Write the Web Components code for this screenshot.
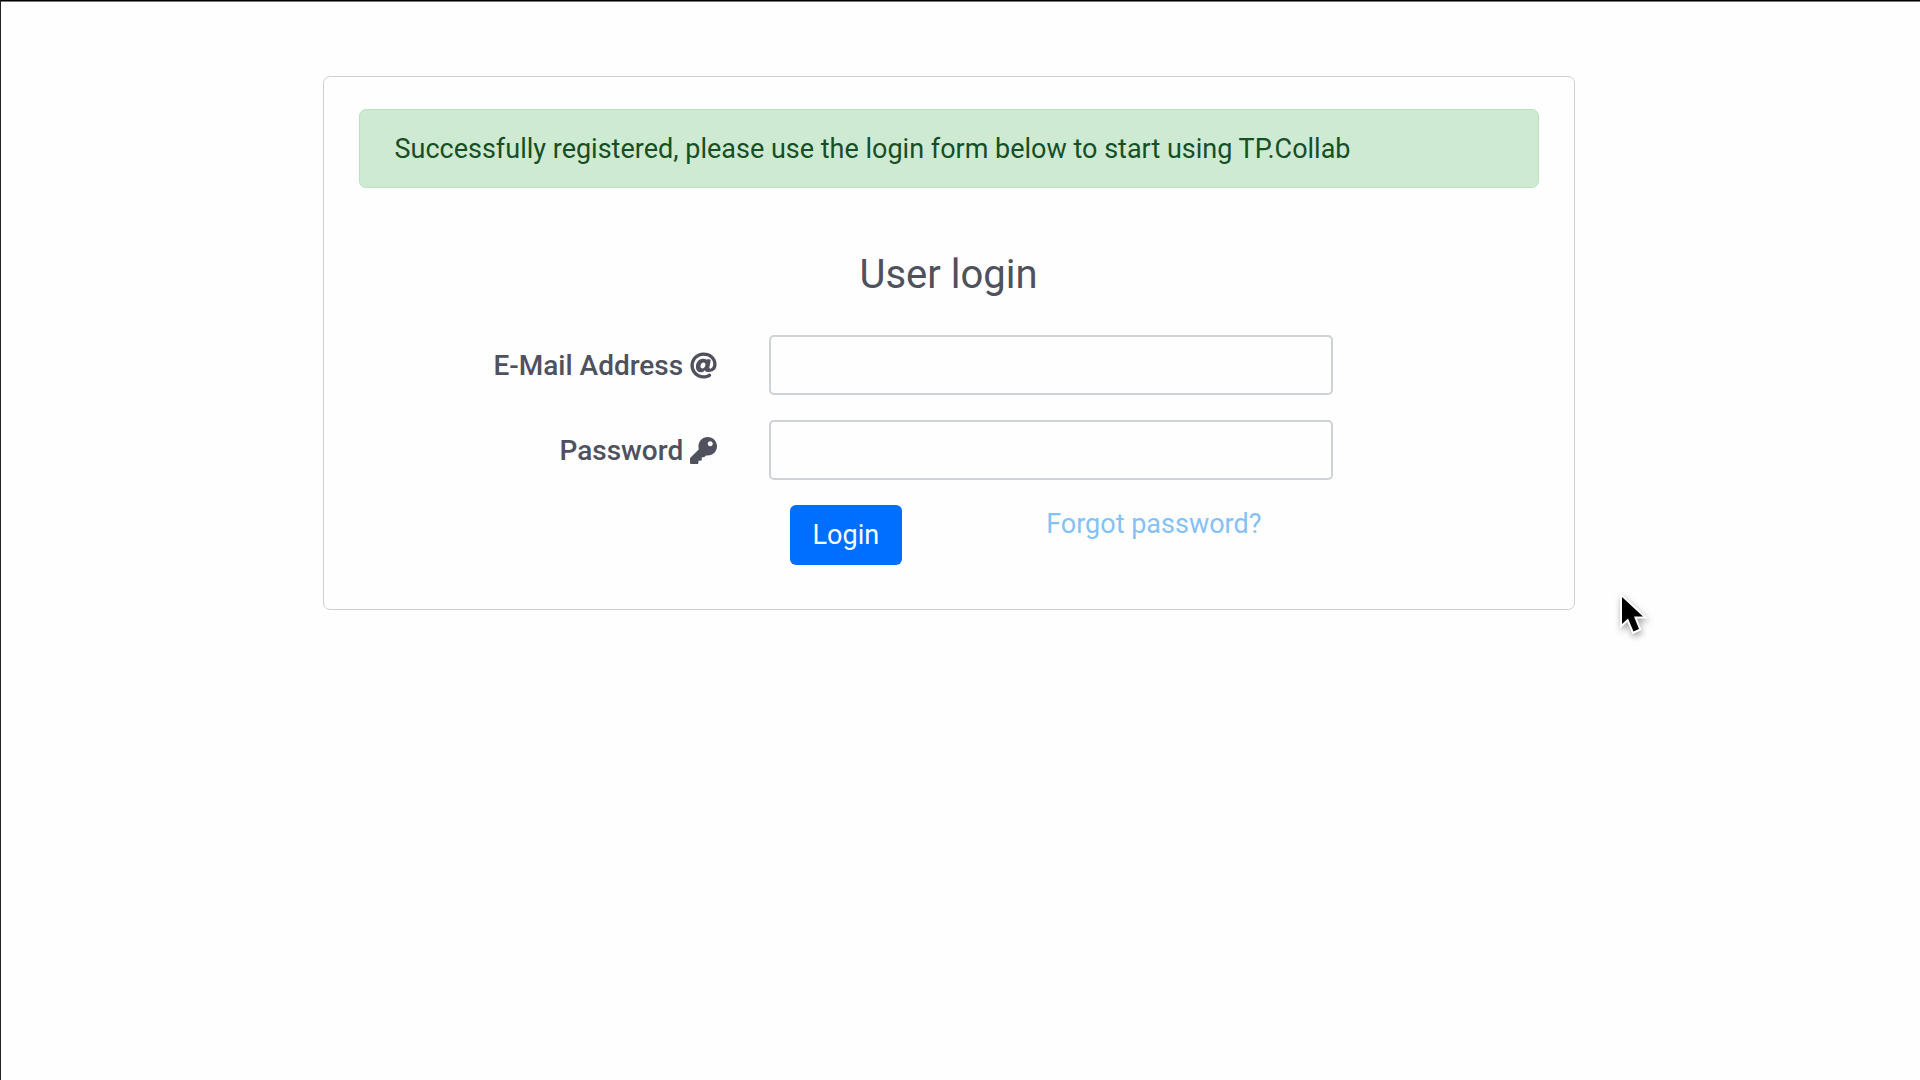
<!DOCTYPE html>
<html lang="en">
<head>
<meta charset="utf-8">
<meta name="viewport" content="width=device-width, initial-scale=1">
<title>User login</title>
<style>
  html { background: #fefefe; }
  body { margin: 0; font-family: Roboto, "Liberation Sans", sans-serif; font-size: 27px; line-height: 39px; color: #4f515c; }
</style>
</head>
<body>
<login-page>
  <login-card>
    <alert-message>Successfully registered, please use the login form below to start using TP.Collab</alert-message>
    <login-form></login-form>
  </login-card>
</login-page>
<pointer-arrow></pointer-arrow>
<script>
const define = (name, html) => {
  const template = document.createElement('template');
  template.innerHTML = html;
  customElements.define(name, class extends HTMLElement {
    constructor() {
      super();
      this.attachShadow({ mode: 'open' }).append(template.content.cloneNode(true));
    }
  });
};

define('login-page', `
  <style>
    :host { display: flex; justify-content: center; box-sizing: border-box; min-height: 100vh; align-items: flex-start;
      padding: 75px 24px 48px 0; border-top: 1px solid #000; border-left: 1px solid #222; box-shadow: inset 0 1px #777; }
  </style>
  <slot></slot>`);

define('login-card', `
  <style>
    :host { display: block; box-sizing: border-box; flex: 0 1 1252px; padding: 32px 35px 44px;
      border: 1px solid #ced0d2; border-radius: 7px; background: #fefefe; }
  </style>
  <slot></slot>`);

define('alert-message', `
  <style>
    :host { display: block; padding: 20px 35px 18px; border: 1px solid #b9e1c2; border-radius: 7px;
      background: #ceead3; color: #174f25; margin-bottom: 62px; }
  </style>
  <div role="alert"><slot></slot></div>`);

define('icon-at', `
  <style>:host { display: inline-block; } svg { display: block; width: 27px; height: 27px; fill: currentColor; }</style>
  <svg viewBox="0 0 512 512" aria-hidden="true"><path d="M256 8C118.941 8 8 118.919 8 256c0 137.059 110.919 248 248 248 48.154 0 95.342-14.14 135.408-40.223 12.005-7.815 14.625-24.288 5.552-35.372l-10.177-12.433c-7.671-9.371-21.179-11.667-31.373-5.129C325.92 429.757 291.314 440 256 440c-101.458 0-184-82.542-184-184S154.542 72 256 72c100.139 0 184 57.619 184 160 0 38.786-21.093 79.742-58.17 83.693-17.349-.454-16.91-12.857-13.476-30.024l23.433-121.11C394.653 149.75 383.308 136 368.225 136h-44.981a13.518 13.518 0 0 0-13.432 11.993l-.01.092c-14.697-17.901-40.448-21.775-59.971-21.775-74.58 0-137.831 62.234-137.831 151.46 0 65.303 36.785 105.87 96 105.87 26.984 0 57.369-15.637 74.991-38.333 9.522 34.104 40.613 34.104 70.71 34.104C462.609 379.41 504 307.798 504 232 504 95.653 394.023 8 256 8zm-21.68 304.43c-22.249 0-36.07-15.623-36.07-40.771 0-44.993 30.779-72.729 58.63-72.729 22.292 0 35.601 15.241 35.601 40.77 0 45.061-33.875 72.73-58.161 72.73z"/></svg>`);

define('icon-key', `
  <style>:host { display: inline-block; } svg { display: block; width: 27px; height: 27px; fill: currentColor; }</style>
  <svg viewBox="0 0 512 512" aria-hidden="true"><path d="M512 176.001C512 273.203 433.202 352 336 352c-11.22 0-22.19-1.062-32.827-3.069l-24.012 27.014A23.999 23.999 0 0 1 261.223 384H224v40c0 13.255-10.745 24-24 24h-40v40c0 13.255-10.745 24-24 24H24c-13.255 0-24-10.745-24-24v-78.059c0-6.365 2.529-12.47 7.029-16.971l161.802-161.802C163.108 213.814 160 195.271 160 176 160 78.798 238.797.001 335.999 0 433.488-.001 512 78.511 512 176.001zM336 128c0 26.51 21.49 48 48 48s48-21.49 48-48-21.49-48-48-48-48 21.49-48 48z"/></svg>`);

define('login-form', `
  <style>
    :host { display: block; }
    h1 { margin: 0 0 36px; font-size: 40px; line-height: 49px; font-weight: 400; text-align: center; }
    form { display: grid; gap: 25px; margin: 0 -26px; }
    .row { display: grid; grid-template-columns: 4fr 6fr 2fr; }
    label { display: flex; justify-content: flex-end; align-items: center; gap: 7px; padding-right: 26px;
      font-size: 28px; font-weight: 500; }
    .field { padding: 0 26px; }
    input { display: block; box-sizing: border-box; width: 100%; height: 60px; padding: 10px 20px;
      border: 2px solid #ced1d6; border-radius: 5px; background: #fefefe; color: #495057; font: inherit; }
    .actions { grid-column: 2; display: grid; grid-template-columns: 1fr 2fr; justify-items: center; align-items: start; }
    button { height: 60px; padding: 0 23px; border: 0; border-radius: 6px; background: #006fff; color: #fff;
      font: inherit; }
    a { color: #85c1f5; text-decoration: none; }
  </style>
  <h1>User login</h1>
  <form>
    <div class="row">
      <label for="email">E-Mail Address <icon-at></icon-at></label>
      <div class="field"><input id="email" type="email"></div>
    </div>
    <div class="row">
      <label for="password">Password <icon-key></icon-key></label>
      <div class="field"><input id="password" type="password"></div>
    </div>
    <div class="row">
      <div class="actions">
        <button type="submit">Login</button>
        <a href="#">Forgot password?</a>
      </div>
    </div>
  </form>`);

define('pointer-arrow', `
  <style>
    :host { position: absolute; left: 1616px; top: 590px; pointer-events: none; }
    svg { display: block; width: 36px; height: 48px; overflow: visible; filter: drop-shadow(1px 3px 3px rgba(0,0,0,.35)); }
  </style>
  <svg viewBox="0 0 36 48" aria-hidden="true"><path d="M6 7V34L12 28.500L17.500 41.500L23 39L18 26.500H27Z" fill="#000" stroke="#fff" stroke-width="4" paint-order="stroke"/></svg>`);
</script>
</body>
</html>
